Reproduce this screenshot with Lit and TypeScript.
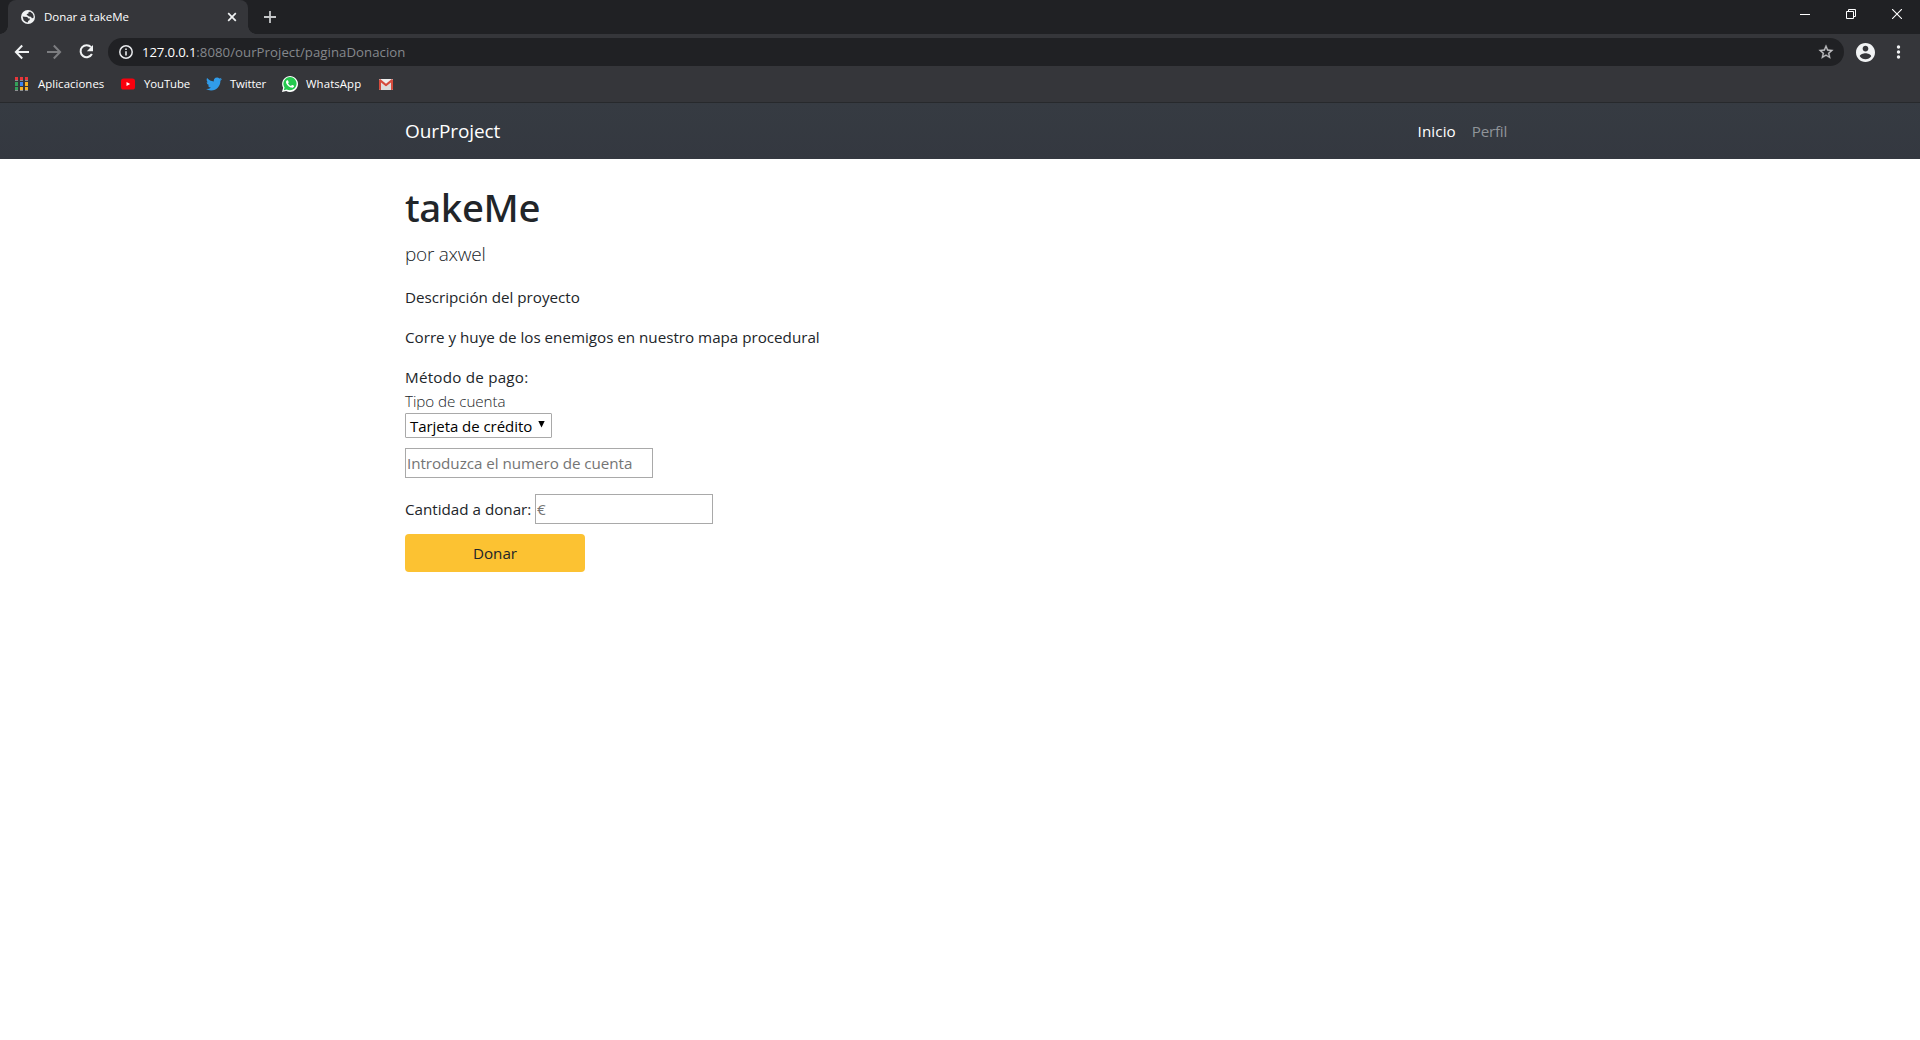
import { LitElement, html, css } from "lit";
import { customElement } from "lit/decorators.js";

@customElement("browser-chrome")
export class BrowserChrome extends LitElement {
  static styles = css`
    :host {
      display: block;
      background: #35363a;
      color: #fff;
      font-family: "Open Sans", "Noto Sans", sans-serif;
    }
    svg { display: block; flex: none; }
    .strip {
      display: flex;
      height: 34px;
      background: #202124;
    }
    .tab {
      display: flex;
      align-items: center;
      box-sizing: border-box;
      position: relative;
      width: 240px;
      margin-left: 8px;
      padding: 0 11px 0 13px;
      border-radius: 8px 8px 0 0;
      background: #35363a;
    }
    .tab::before, .tab::after {
      content: "";
      position: absolute;
      bottom: 0;
      width: 8px;
      height: 8px;
    }
    .tab::before {
      left: -8px;
      background: radial-gradient(circle at 0 0, transparent 7.5px, #35363a 8px);
    }
    .tab::after {
      right: -8px;
      background: radial-gradient(circle at 100% 0, transparent 7.5px, #35363a 8px);
    }
    .title {
      flex: 1;
      margin-left: 9px;
      font-size: 11.5px;
      line-height: 34px;
      letter-spacing: -0.05px;
    }
    .new-tab { margin: 11px 0 0 16px; }
    .window {
      display: flex;
      gap: 36px;
      margin: 9px 18px 0 auto;
    }
    .toolbar {
      display: flex;
      align-items: center;
      height: 36px;
      padding: 0 12px 0 14px;
    }
    .nav { display: flex; gap: 16px; }
    .omnibox {
      display: flex;
      align-items: center;
      flex: 1;
      height: 28px;
      margin-left: 14px;
      padding: 0 10px 0 11px;
      border-radius: 14px;
      background: #202124;
      font-size: 13.2px;
      line-height: 28px;
    }
    .url { flex: 1; margin-left: 9px; color: #85888c; letter-spacing: 0.05px; }
    .host { color: #fff; letter-spacing: -0.15px; }
    .account { margin: 0 14px 0 12px; }
    .bookmarks {
      display: grid;
      grid-template-columns: 106px 85px 76px 97px auto;
      align-items: center;
      height: 28px;
      padding: 0 0 4px 15px;
      border-bottom: 1px solid #27292c;
    }
    .bookmark {
      display: flex;
      align-items: center;
      font-size: 11.4px;
      line-height: 28px;
    }
    .apps { gap: 10px; letter-spacing: 0.05px; }
    .youtube { gap: 9px; letter-spacing: -0.1px; }
    .twitter { gap: 8px; letter-spacing: -0.15px; }
    .whatsapp { gap: 8px; letter-spacing: 0.1px; }
  `;

  render() {
    return html`
      <div class="strip">
        <div class="tab">
          <svg width="14" height="14" viewBox="0 0 14 14">
            <circle cx="7" cy="7" r="7" fill="#f1f3f4" />
            <path d="M7.6 2.1 9.3 1.8 11.6 3.4 12.6 6 12.4 8 10.9 8.3 9.9 6.7 8 6.6 6.8 5.4 5.6 5 6 4 7.4 3.6Z M1.6 6.6 3.4 6.8 6.2 7.1 7.4 8.4 9 8.6 8.4 10.2 7.3 10.8 6.7 12.4 5 12 2.6 10.2Z" fill="#35363a" />
          </svg>
          <span class="title">Donar a takeMe</span>
          <svg width="10" height="10" viewBox="0 0 10 10" stroke="#f1f3f4" stroke-width="1.7"><path d="M1.2 1.2l7.6 7.6M8.8 1.2 1.2 8.8" /></svg>
        </div>
        <svg class="new-tab" width="12" height="12" viewBox="0 0 12 12" stroke="#c5c7c9" stroke-width="1.8"><path d="M6 0v12M0 6h12" /></svg>
        <div class="window">
          <svg width="10" height="10" viewBox="0 0 10 10" stroke="#fff"><path d="M0 5.5h10" /></svg>
          <svg width="10" height="10" viewBox="0 0 10 10" fill="none" stroke="#fff"><path d="M.5 2.5h7v7h-7zM2.5 2.5v-2h7v7h-2" /></svg>
          <svg width="10" height="10" viewBox="0 0 10 10" stroke="#fff" stroke-width="1.1"><path d="M0 0l10 10M10 0 0 10" /></svg>
        </div>
      </div>
      <div class="toolbar">
        <div class="nav">
          <svg width="16" height="16" viewBox="0 0 16 16" fill="none" stroke="#f1f3f4" stroke-width="2"><path d="M15 8H2.5M8.2 1.5 1.9 8l6.3 6.5" /></svg>
          <svg width="16" height="16" viewBox="0 0 16 16" fill="none" stroke="#7c7d80" stroke-width="2"><path d="M1 8h12.5M7.8 1.5 14.1 8l-6.3 6.5" /></svg>
          <svg width="16" height="16" viewBox="0 0 16 16"><path d="M13.1 3.2A6 6 0 1 0 13.9 10" fill="none" stroke="#f1f3f4" stroke-width="2" /><path d="M15 1v6.2H8.8z" fill="#f1f3f4" /></svg>
        </div>
        <div class="omnibox">
          <svg width="14" height="14" viewBox="0 0 14 14"><circle cx="7" cy="7" r="6.2" fill="none" stroke="#e8eaed" stroke-width="1.5" /><path d="M6.2 6.2h1.6v4.3H6.2zM6.2 3.4h1.6V5H6.2z" fill="#e8eaed" /></svg>
          <span class="url"><span class="host">127.0.0.1</span>:8080/ourProject/paginaDonacion</span>
          <svg width="16" height="16" viewBox="1 1 22 22" fill="#c0c1c3"><path d="M22 9.24l-7.19-.62L12 2 9.19 8.63 2 9.24l5.46 4.73L5.82 21 12 17.27 18.18 21l-1.63-7.03L22 9.24zM12 15.4l-3.76 2.27 1-4.28-3.32-2.88 4.38-.38L12 6.1l1.71 4.04 4.38.38-3.32 2.88 1 4.28L12 15.4z" stroke="#c0c1c3" stroke-width=".4" /></svg>
        </div>
        <svg class="account" width="19" height="19" viewBox="2 2 20 20" fill="#f1f3f4"><path d="M12 2C6.48 2 2 6.48 2 12s4.48 10 10 10 10-4.48 10-10S17.52 2 12 2zm0 3c1.66 0 3 1.34 3 3s-1.34 3-3 3-3-1.34-3-3 1.34-3 3-3zm0 14.2c-2.5 0-4.71-1.28-6-3.22.03-1.99 4-3.08 6-3.08 1.99 0 5.97 1.09 6 3.08-1.29 1.94-3.5 3.22-6 3.22z" /></svg>
        <svg width="19" height="16" viewBox="0 0 19 16" fill="#f1f3f4"><circle cx="9.5" cy="3" r="1.7" /><circle cx="9.5" cy="8" r="1.7" /><circle cx="9.5" cy="13" r="1.7" /></svg>
      </div>
      <div class="bookmarks">
        <span class="bookmark apps">
          <svg width="13" height="14" viewBox="0 0 13 14">
            <path d="M0 0h3v3H0zM5 0h3v3H5zM10 0h3v3h-3z" fill="#e8373a" />
            <path d="M0 3h3v1H0zM5 3h3v1H5zM10 3h3v1h-3z" fill="#8d8f91" />
            <path d="M0 5h3v4H0zM0 10h3v3H0z" fill="#34a05a" />
            <path d="M5 5h3v4H5z" fill="#3b85f0" />
            <path d="M10 5h3v4h-3zM5 10h3v3H5zM10 10h3v3h-3z" fill="#f6b224" />
            <path d="M0 13h3v1H0zM5 13h3v1H5zM10 13h3v1h-3z" fill="#8d8f91" />
          </svg>Aplicaciones
        </span>
        <span class="bookmark youtube">
          <svg width="14" height="12" viewBox="0 0 14 12"><rect y=".5" width="14" height="11" rx="2.6" fill="#f9000d" /><path d="M5.5 4v4L9.2 6z" fill="#fff" /></svg>YouTube
        </span>
        <span class="bookmark twitter">
          <svg width="16" height="14" viewBox="0 2.3 24 19.5"><path fill="#309cea" d="M23.953 4.57a10 10 0 0 1-2.825.775 4.958 4.958 0 0 0 2.163-2.723c-.951.555-2.005.959-3.127 1.184a4.92 4.92 0 0 0-8.384 4.482C7.69 8.095 4.067 6.13 1.64 3.162a4.822 4.822 0 0 0-.666 2.475c0 1.71.87 3.213 2.188 4.096a4.904 4.904 0 0 1-2.228-.616v.06a4.923 4.923 0 0 0 3.946 4.827 4.996 4.996 0 0 1-2.212.085 4.936 4.936 0 0 0 4.604 3.417 9.867 9.867 0 0 1-6.102 2.105c-.39 0-.779-.023-1.17-.067a13.995 13.995 0 0 0 7.557 2.209c9.053 0 13.998-7.496 13.998-13.985 0-.21 0-.42-.015-.63A9.935 9.935 0 0 0 24 4.59z" /></svg>Twitter
        </span>
        <span class="bookmark whatsapp">
          <svg width="16" height="16" viewBox="0 0 24 24"><path d="M0 24l1.7-6.2A11.9 11.9 0 1 1 6.3 22.4z" fill="#fff" /><path d="M2.7 21.3l1.1-4.1A9.9 9.9 0 1 1 7.1 20.2z" fill="#25c94f" /><path fill="#fff" d="M17.47 14.38c-.3-.15-1.76-.87-2.03-.97-.27-.1-.47-.15-.67.15-.2.3-.77.97-.94 1.16-.17.2-.35.22-.64.08-.3-.15-1.26-.46-2.39-1.48-.88-.79-1.48-1.76-1.65-2.06-.17-.3-.02-.46.13-.6.13-.14.3-.35.44-.53.15-.17.2-.3.3-.5.1-.2.05-.37-.02-.52-.08-.15-.67-1.61-.92-2.2-.24-.58-.49-.5-.67-.51h-.57c-.2 0-.52.07-.79.37-.27.3-1.04 1.02-1.04 2.48s1.06 2.87 1.21 3.07c.15.2 2.1 3.2 5.08 4.48.7.31 1.26.49 1.7.63.7.23 1.36.2 1.86.12.57-.08 1.76-.72 2-1.41.26-.7.26-1.29.18-1.42-.07-.12-.27-.2-.57-.34z" /></svg>WhatsApp
        </span>
        <span class="bookmark gmail">
          <svg width="14" height="11" viewBox="0 0 14 11"><rect width="14" height="11" rx="1" fill="#eee" /><path d="M2 11V4l5 4 5-4v7" fill="#dcdcdc" /><path d="M0 1v9a1 1 0 0 0 1 1h1V3.4l5 4 5-4V11h1a1 1 0 0 0 1-1V1l-1.2-1L7 4.8 1.2 0z" fill="#d54b3d" /></svg>
        </span>
      </div>
    `;
  }
}

@customElement("app-root")
export class AppRoot extends LitElement {
  static styles = css`
    :host {
      display: block;
      height: 1040px;
      overflow: hidden;
      background: #fff;
      color: #212529;
      font-family: "Open Sans", "Noto Sans", sans-serif;
      font-size: 15.2px;
      line-height: 24px;
    }
    .navbar {
      display: flex;
      justify-content: center;
      height: 56px;
      background: linear-gradient(#363b42, #343840);
    }
    .navbar-inner {
      display: flex;
      align-items: center;
      justify-content: space-between;
      width: 1110px;
    }
    .brand { color: #fff; font-size: 19px; line-height: 30px; letter-spacing: -0.1px; }
    .links { display: flex; gap: 16px; padding: 0 8px 1px 0; }
    .link { color: #909499; letter-spacing: -0.25px; }
    .active { color: #fff; letter-spacing: 0.1px; }
    main { width: 1110px; margin: 0 auto; padding-top: 24px; }
    h1 {
      margin: 0 0 8px;
      height: 48px;
      font-family: "Noto Sans", "Open Sans", sans-serif;
      font-size: 38.4px;
      font-weight: 500;
      line-height: 48px;
      letter-spacing: -0.4px;
    }
    .lead {
      margin: 0 0 16px;
      font-size: 19px;
      font-weight: 300;
      line-height: 30px;
      letter-spacing: -0.25px;
    }
    p { margin: 0 0 16px; letter-spacing: -0.01px; }
    .method { margin: 0; letter-spacing: 0.23px; }
    .kind { display: block; font-weight: 300; letter-spacing: -0.05px; }
    .picker {
      display: flex;
      align-items: center;
      box-sizing: border-box;
      width: 147px;
      height: 25px;
      padding: 0 6px 0 4px;
      border: 1px solid #a9a9a9;
      justify-content: space-between;
      border-radius: 1px;
      color: #000;
      font-size: 15px;
      letter-spacing: -0.05px;
    }
    .arrow { margin-bottom: 2px; }
    input {
      display: block;
      box-sizing: border-box;
      height: 30px;
      padding: 1px;
      border: 1px solid #a9a9a9;
      background: #fff;
      font: inherit;
      line-height: 26px;
      letter-spacing: -0.04px;
    }
    input::placeholder { color: #757575; opacity: 1; }
    .account { width: 248px; margin: 10px 0 16px; }
    .amount { display: flex; align-items: center; gap: 4px; }
    .amount-label { width: 126px; white-space: nowrap; }
    .euros { width: 178px; }
    button {
      display: block;
      width: 180px;
      height: 38px;
      margin-top: 10px;
      padding: 0;
      border: 0;
      border-radius: 4px;
      background: #fcc232;
      color: #212529;
      font: inherit;
    }
  `;

  render() {
    return html`
      <browser-chrome></browser-chrome>
      <nav class="navbar">
        <div class="navbar-inner">
          <span class="brand">OurProject</span>
          <div class="links">
            <span class="link active">Inicio</span>
            <span class="link">Perfil</span>
          </div>
        </div>
      </nav>
      <main>
        <h1>takeMe</h1>
        <p class="lead">por axwel</p>
        <p>Descripción del proyecto</p>
        <p>Corre y huye de los enemigos en nuestro mapa procedural</p>
        <p class="method">Método de pago:</p>
        <label class="kind">Tipo de cuenta</label>
        <div class="picker">
          <span>Tarjeta de crédito</span>
          <svg class="arrow" width="7" height="7" viewBox="0 0 7 7"><path d="M.3 0h6.4L3.5 6.5z" fill="#000" /></svg>
        </div>
        <input class="account" placeholder="Introduzca el numero de cuenta" />
        <div class="amount">
          <label class="amount-label">Cantidad a donar:</label>
          <input class="euros" placeholder="€" />
        </div>
        <button>Donar</button>
      </main>
    `;
  }
}
